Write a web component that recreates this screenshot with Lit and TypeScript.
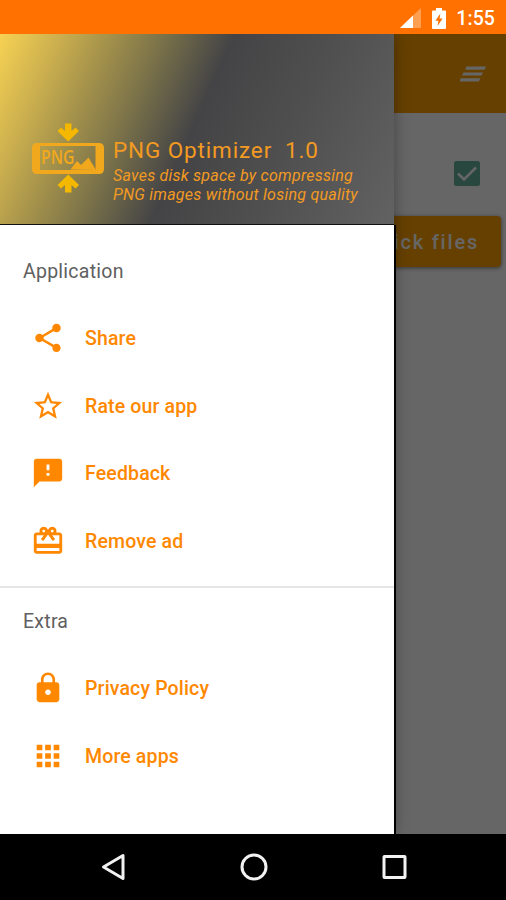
import { LitElement, html, css, svg } from "lit";
import { customElement, property } from "lit/decorators.js";

const icons: Record<string, string> = {
  share:
    "M18 16.08c-.76 0-1.44.3-1.96.77L8.91 12.7c.05-.23.09-.46.09-.7s-.04-.47-.09-.7l7.05-4.11c.54.5 1.25.81 2.04.81 1.66 0 3-1.34 3-3s-1.34-3-3-3-3 1.34-3 3c0 .24.04.47.09.7L8.04 9.81C7.5 9.31 6.79 9 6 9c-1.66 0-3 1.34-3 3s1.34 3 3 3c.79 0 1.5-.31 2.04-.81l7.12 4.16c-.05.21-.08.43-.08.65 0 1.61 1.31 2.92 2.92 2.92s2.92-1.31 2.92-2.92-1.31-2.92-2.92-2.92z",
  star: "M22 9.24l-7.19-.62L12 2 9.19 8.63 2 9.24l5.46 4.73L5.82 21 12 17.27 18.18 21l-1.63-7.03L22 9.24zM12 15.4l-3.76 2.27 1-4.28-3.32-2.88 4.38-.38L12 6.1l1.71 4.04 4.38.38-3.32 2.88 1 4.28L12 15.4z",
  feedback:
    "M20 2H4c-1.1 0-1.99.9-1.99 2L2 22l4-4h14c1.1 0 2-.9 2-2V4c0-1.1-.9-2-2-2zm-7 12h-2v-2h2v2zm0-4h-2V6h2v4z",
  gift: "M20 6h-2.18c.11-.31.18-.65.18-1 0-1.66-1.34-3-3-3-1.05 0-1.96.54-2.5 1.35l-.5.67-.5-.68C10.96 2.54 10.05 2 9 2 7.34 2 6 3.34 6 5c0 .35.07.69.18 1H4c-1.11 0-1.99.89-1.99 2L2 19c0 1.11.89 2 2 2h16c1.11 0 2-.89 2-2V8c0-1.11-.89-2-2-2zm-5-2c.55 0 1 .45 1 1s-.45 1-1 1-1-.45-1-1 .45-1 1-1zM9 4c.55 0 1 .45 1 1s-.45 1-1 1-1-.45-1-1 .45-1 1-1zm11 15H4v-2h16v2zm0-5H4V8h5.08L7 10.83 8.62 12 11 8.76l1-1.36 1 1.36L15.38 12 17 10.83 14.92 8H20v6z",
  lock: "M18 8h-1V6c0-2.76-2.24-5-5-5S7 3.24 7 6v2H6c-1.1 0-2 .9-2 2v10c0 1.1.9 2 2 2h12c1.1 0 2-.9 2-2V10c0-1.1-.9-2-2-2zm-6 9c-1.1 0-2-.9-2-2s.9-2 2-2 2 .9 2 2-.9 2-2 2zm3.1-9H8.9V6c0-1.71 1.39-3.1 3.1-3.1 1.71 0 3.1 1.39 3.1 3.1v2z",
  apps: "M4 8h4V4H4v4zm6 12h4v-4h-4v4zm-6 0h4v-4H4v4zm0-6h4v-4H4v4zm6 0h4v-4h-4v4zm6-10v4h4V4h-4zm-6 4h4V4h-4v4zm6 6h4v-4h-4v4zm0 6h4v-4h-4v4z",
};

@customElement("menu-item")
class MenuItem extends LitElement {
  @property() icon = "";
  @property() label = "";
  static styles = css`
    :host {
      display: flex;
      align-items: center;
      height: 67.5px;
      padding-left: 31px;
      color: #ff8800;
      font-size: 19.5px;
      font-weight: 500;
      letter-spacing: 0.15px;
    }
    svg {
      width: 34px;
      height: 34px;
      margin: 0 20px 1.5px 0;
      fill: currentColor;
    }
  `;
  render() {
    return html`<svg viewBox="0 0 24 24">${svg`<path d=${icons[this.icon]} />`}</svg
      ><span>${this.label}</span>`;
  }
}

@customElement("app-root")
class AppRoot extends LitElement {
  static styles = css`
    :host {
      display: flex;
      flex-direction: column;
      width: 506px;
      height: 900px;
      overflow: hidden;
      background: #000;
      font-family: Roboto, sans-serif;
    }
    * {
      box-sizing: border-box;
    }
    svg {
      display: block;
      flex: none;
    }
    .status {
      height: 34px;
      flex: none;
      display: flex;
      align-items: center;
      justify-content: flex-end;
      padding: 2px 11px 0 0;
      background: #ff7100;
      color: #fff;
      font-size: 19.5px;
      font-weight: 500;
      letter-spacing: 0.1px;
    }
    .signal {
      margin-right: 11px;
    }
    .battery {
      margin-right: 10px;
    }
    .stage {
      position: relative;
      height: 799.5px;
      flex: none;
      overflow: hidden;
      background: #fff;
    }
    .toolbar {
      height: 79px;
      display: flex;
      align-items: center;
      justify-content: flex-end;
      padding-right: 20px;
      background: #ffa000;
    }
    .option {
      height: 103px;
      display: flex;
      justify-content: flex-end;
      padding: 48px 26px 0 0;
    }
    .pick {
      height: 51px;
      margin: 0 5px;
      display: flex;
      align-items: center;
      justify-content: flex-end;
      padding-right: 22px;
      border-radius: 4px;
      background: #ffa000;
      box-shadow: 0 1px 4px rgba(0, 0, 0, 0.5);
      color: #fff;
      font-size: 20px;
      font-weight: 500;
      letter-spacing: 1.8px;
    }
    .scrim {
      position: absolute;
      inset: 0;
      background: rgba(0, 0, 0, 0.6);
    }
    .drawer {
      position: absolute;
      top: 0;
      left: 0;
      bottom: 0;
      width: 394px;
      background: #fff;
      box-shadow: 0 0 14px rgba(0, 0, 0, 0.35);
    }
    .panel {
      height: 609px;
      width: 396px;
      border-right: 2px solid #000;
      background: #fff;
    }
    .hero {
      height: 191px;
      width: 394px;
      display: flex;
      padding: 88px 0 0 31px;
      border-bottom: 1px solid #111;
      background: linear-gradient(
        114deg,
        #f6d253 0%,
        #ceb14f 12%,
        #a4924b 23%,
        #787049 35%,
        #444446 49%,
        #4f4f4f 70%,
        #626262 100%
      );
      color: #f39a22;
    }
    .logo {
      margin-right: 8px;
    }
    .title {
      margin-top: 14px;
      font-size: 22.5px;
      line-height: 28px;
      letter-spacing: 0.87px;
      white-space: pre;
    }
    .tagline {
      margin-top: 2px;
      font-size: 16px;
      line-height: 19px;
      font-style: italic;
      letter-spacing: 0.24px;
      white-space: pre;
    }
    .heading {
      height: 80px;
      padding: 35px 0 0 23px;
      color: #606060;
      font-size: 19.5px;
      line-height: 24px;
      letter-spacing: 0.25px;
    }
    .extra {
      height: 67.5px;
      padding-top: 22px;
    }
    .divider {
      height: 2px;
      margin-top: 10.5px;
      background: #e6e6e6;
    }
    .nav {
      height: 66px;
      flex: none;
      display: flex;
      justify-content: space-between;
      align-items: center;
      padding: 0 98px 0 99px;
      fill: none;
      stroke: #f2f2f2;
      stroke-width: 3;
    }
  `;

  render() {
    return html`
      <div class="status">
        <svg class="signal" width="21" height="20" viewBox="0 0 21 20">
          <path d="M21 0V20H0Z" fill="#ff9f52" />
          <path d="M13 7.6V20H0Z" fill="#fff" />
        </svg>
        <svg class="battery" width="14" height="21" viewBox="0 0 14 21">
          <path d="M4 0h6v2.5h3q1 0 1 1V20q0 1-1 1H1q-1 0-1-1V3.5q0-1 1-1h3z" fill="#fff" />
          <path d="M8.4 5.5 3.4 12.8h3L5.6 18l5-7.5h-3z" fill="#ff7100" />
        </svg>
        <span>1:55</span>
      </div>
      <div class="stage">
        <div class="toolbar">
          <svg width="26" height="16" viewBox="0 0 26 16" fill="#fff">
            <path d="M6.5 0.5h19.500l-1.500 3.300h-19.500zM3.500 6.400h19.500l-1.500 3.200h-19.500zM0.800 12.200h19.500l-1.500 3.200h-19.500z" />
          </svg>
        </div>
        <div class="option">
          <svg width="26" height="25" viewBox="0 0 26 25">
            <rect width="26" height="25" rx="2.5" fill="#65b39d" />
            <path d="M4 12.5 10 18.5 22 6.5" fill="none" stroke="#fff" stroke-width="2.5" />
          </svg>
        </div>
        <div class="pick">Pick files</div>
        <div class="scrim"></div>
        <div class="drawer">
          <div class="hero">
            <svg class="logo" width="74" height="72" viewBox="0 0 74 72" fill="#f2a81d">
              <path
                d="M34 1.5h6.5v7.5l4-3.5 3.5 3.5-10.8 10.5L26.5 9 30 5.5l4 3.5zM34 70.5h6.5V63l4 3.5L48 63 37.2 52.5 26.5 63l3.5 3.5 4-3.5z"
                fill="#f5b800"
              />
              <path
                fill-rule="evenodd"
                d="M6 21h62q5 0 5 5v21q0 5-5 5H6q-5 0-5-5V26q0-5 5-5zM9 24v24h55.5V24z"
              />
              <path d="M39.5 47.5 46 39l4 4 7.5-7.5L65 48z" />
              <text
                x="10"
                y="41.5"
                font-family="Open Sans, sans-serif"
                font-size="20"
                font-weight="600"
                textLength="33.5"
                lengthAdjust="spacingAndGlyphs"
              >PNG</text>
            </svg>
            <div>
              <div class="title">PNG Optimizer  1.0</div>
              <div class="tagline">Saves disk space by compressing
PNG images without losing quality</div>
            </div>
          </div>
          <div class="panel">
            <div class="heading">Application</div>
            <menu-item icon="share" label="Share"></menu-item>
            <menu-item icon="star" label="Rate our app"></menu-item>
            <menu-item icon="feedback" label="Feedback"></menu-item>
            <menu-item icon="gift" label="Remove ad"></menu-item>
            <div class="divider"></div>
            <div class="heading extra">Extra</div>
            <menu-item icon="lock" label="Privacy Policy"></menu-item>
            <menu-item icon="apps" label="More apps"></menu-item>
          </div>
        </div>
      </div>
      <div class="nav">
        <svg width="28" height="28" viewBox="0 0 28 28">
          <path d="M24 2.5V25.5L4.5 14Z" stroke-linejoin="round" />
        </svg>
        <svg width="28" height="28" viewBox="0 0 28 28"><circle cx="14" cy="14" r="12" /></svg>
        <svg width="28" height="28" viewBox="0 0 28 28">
          <rect x="4" y="3.5" width="21" height="21" rx="0.5" />
        </svg>
      </div>
    `;
  }
}
